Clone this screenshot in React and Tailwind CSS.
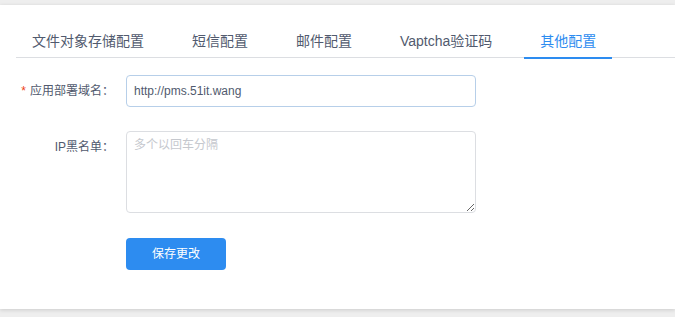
export default function App() {
  const tabs = ["文件对象存储配置", "短信配置", "邮件配置", "Vaptcha验证码", "其他配置"];
  const active = 4;

  return (
    <div
      className="w-[675px] h-[317px] bg-[#eeeeee] pt-[5px] overflow-hidden"
      style={{ fontFamily: '"Liberation Sans", "Noto Sans CJK SC", sans-serif' }}
    >
      <div className="h-[304px] bg-white shadow-[0_1px_4px_rgba(0,0,0,0.15)] pl-4 pt-[19px]">
        {/* tabs */}
        <div className="flex border-b border-[#dcdee2] h-[34px]">
          {tabs.map((t, i) => (
            <div
              key={t}
              className={`relative mr-4 px-4 h-[34px] flex items-center text-[14px] ${
                i === active ? "text-[#2d8cf0]" : "text-[#515a6e]"
              }`}
            >
              {t}
              {i === active && (
                <div className="absolute left-0 right-0 bottom-[-1px] h-[2px] bg-[#2d8cf0]" />
              )}
            </div>
          ))}
        </div>

        {/* form */}
        <div className="mt-[17px] text-[12px] text-[#515a6e]">
          <div className="flex items-start">
            <div className="w-[110px] pr-3 h-8 flex items-center justify-end">
              <span className="text-[#ed4014] mr-1">*</span>
              应用部署域名：
            </div>
            <div className="w-[350px] h-8 border border-[#b7cfe9] rounded-[4px] px-[7px] flex items-center text-[12px] text-[#515a6e]">
              http://pms.51it.wang
            </div>
          </div>

          <div className="flex items-start mt-6">
            <div className="w-[110px] pr-3 h-8 flex items-center justify-end">IP黑名单：</div>
            <textarea
              className="w-[350px] h-[82px] border border-[#dcdee2] rounded-[4px] px-[7px] py-[4px] text-[12px] text-[#515a6e] placeholder:text-[#c5c8ce] outline-none"
              placeholder="多个以回车分隔"
            />
          </div>

          <div className="flex mt-[25px]">
            <div className="w-[110px]" />
            <button className="w-[100px] h-8 bg-[#2d8cf0] text-white rounded-[4px] text-[12px]">
              保存更改
            </button>
          </div>
        </div>
      </div>
    </div>
  );
}
